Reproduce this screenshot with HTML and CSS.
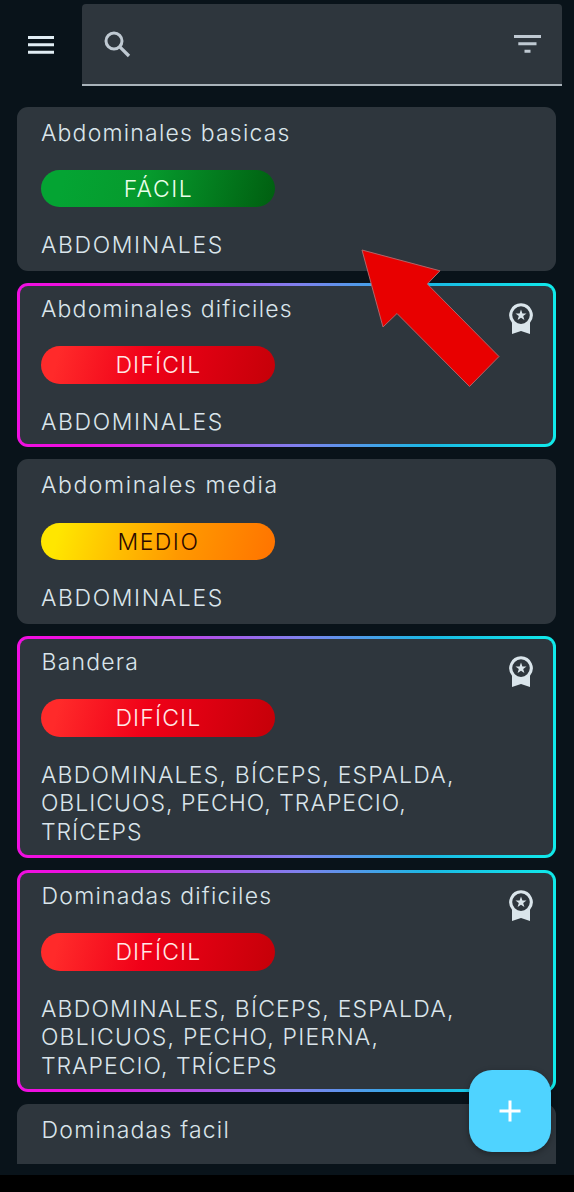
FILE: index.html
```html
<!DOCTYPE html>
<html lang="es">
<head>
<meta charset="utf-8">
<title>Ejercicios</title>
<link rel="stylesheet" href="styles.css">
</head>
<body>
<svg width="0" height="0" class="defs">
  <symbol id="badge" viewBox="0 0 24 32">
    <path fill-rule="evenodd" d="M12 .3a11.8 11.8 0 0 1 9 19.4V31l-9-3-9 3V19.700A11.800 11.800 0 0 1 12 .3zM12 3.300a8.800 8.800 0 1 0 0 17.600a8.800 8.800 0 0 0 0-17.600z"/>
    <path d="M12 6.600l1.400 3.900 4.100.1-3.300 2.500 1.200 4-3.400-2.400-3.400 2.400 1.200-4-3.300-2.500 4.100-.1z"/>
  </symbol>
</svg>
<div class="app">
  <header class="top">
    <button class="menu" aria-label="Menú"><svg width="26" height="18" viewBox="0 0 26 18"><path d="M0 0h26v3H0zM0 7.300h26v3H0zM0 14.700h26v3H0z"/></svg></button>
    <div class="search">
      <svg width="27" height="27" viewBox="0 0 27 27"><circle cx="10" cy="10" r="8" fill="none" stroke="currentColor" stroke-width="3"/><path d="M15.800 15.800L25 25" stroke="currentColor" stroke-width="3.300"/></svg>
      <svg width="27" height="18" viewBox="0 0 27 18"><path d="M0 0h27v3H0zM4.300 7.300h18.200v3H4.300zM10.500 14.700h6v3h-6z"/></svg>
    </div>
  </header>
  <main class="list">
    <article class="card">
      <h2 class="title">Abdominales basicas</h2>
      <div class="pill easy">FÁCIL</div>
      <p class="muscles"><span class="wide">ABDOMINALES</span></p>
    </article>
    <article class="card premium">
      <h2 class="title">Abdominales dificiles</h2>
      <svg class="badge"><use href="#badge"/></svg>
      <div class="pill hard">DIFÍCIL</div>
      <p class="muscles"><span class="wide">ABDOMINALES</span></p>
    </article>
    <article class="card">
      <h2 class="title wide">Abdominales media</h2>
      <div class="pill medium">MEDIO</div>
      <p class="muscles"><span class="wide">ABDOMINALES</span></p>
    </article>
    <article class="card premium">
      <h2 class="title inset">Bandera</h2>
      <svg class="badge"><use href="#badge"/></svg>
      <div class="pill hard">DIFÍCIL</div>
      <p class="muscles"><span>ABDOMINALES, BÍCEPS, ESPALDA,</span><span class="tight">OBLICUOS, PECHO, TRAPECIO,</span><span class="tight">TRÍCEPS</span></p>
    </article>
    <article class="card premium">
      <h2 class="title inset">Dominadas dificiles</h2>
      <svg class="badge"><use href="#badge"/></svg>
      <div class="pill hard">DIFÍCIL</div>
      <p class="muscles"><span>ABDOMINALES, BÍCEPS, ESPALDA,</span><span>OBLICUOS, PECHO, PIERNA,</span><span class="tight">TRAPECIO, TRÍCEPS</span></p>
    </article>
    <article class="card">
      <h2 class="title inset">Dominadas facil</h2>
    </article>
  </main>
  <div class="navbar"></div>
  <svg class="arrow" width="140" height="140" viewBox="0 0 140 140"><path d="M2 2L80 22.800 67.300 36 139 108.500 109.500 138.500 37 65.500 23 79z"/></svg>
  <button class="fab" aria-label="Añadir"><svg width="22" height="22" viewBox="0 0 22 22"><path d="M9.500.500h3v9h9v3h-9v9h-3v-9h-9v-3h9z"/></svg></button>
</div>
</body>
</html>
```
FILE: styles.css
```css
* { box-sizing: border-box; }
body { margin: 0; background: #09131a; }
.defs { display: block; position: absolute; }
.app {
  position: relative;
  display: flex;
  flex-direction: column;
  width: 574px;
  height: 1192px;
  overflow: hidden;
  background: #09131a;
  color: #dae5eb;
  font-family: Inter, "Liberation Sans", sans-serif;
  font-size: 23px;
  font-weight: 300;
  line-height: 28.8px;
}
svg { fill: currentColor; display: block; flex: none; }
button { border: 0; padding: 0; background: none; color: inherit; }
.top { display: flex; height: 86px; padding: 4px 12px 0 0; flex: none; }
.menu { width: 82px; display: flex; justify-content: center; align-items: center; color: #e1edf4; }
.search {
  flex: 1;
  display: flex;
  align-items: center;
  justify-content: space-between;
  padding: 0 21px 0 21.500px;
  border-bottom: 2px solid #a9b3ba;
  border-radius: 4px 4px 0 0;
  background: #2e363d;
  color: #bfc9d2;
}
.list {
  display: flex;
  flex-direction: column;
  gap: 12.2px;
  height: 1077.500px;
  padding: 20.500px 17.600px 0 17.400px;
  overflow: hidden;
  flex: none;
}
.card {
  position: relative;
  flex: none;
  padding: 12px 23.500px 10.800px;
  border-radius: 11px;
  background: #2e363d;
}
.premium {
  padding: 9px 20.500px 7.800px;
  border: 3px solid transparent;
  background: linear-gradient(#2e363d, #2e363d) padding-box, linear-gradient(90deg, #f00fe0 0%, #ee10e0 12%, #8080ee 52%, #1bb8e4 76%, #10eaea 100%) border-box;
}
.title { margin: 0 0 22.500px; font-size: inherit; font-weight: 300; letter-spacing: 1.2px; }
.title.inset { padding-left: 0.700px; }
.badge { position: absolute; top: 17px; right: 20px; width: 24px; height: 32px; }
.pill { width: 234px; height: 37.500px; border-radius: 19px; line-height: 38.800px; text-align: center; letter-spacing: 1.5px; text-indent: 1px; }
.easy { background: linear-gradient(105deg, #04a433 10%, #069a2d 45%, #005e10 100%); color: #eaffea; }
.hard { background: linear-gradient(105deg, #ff2a2a 8%, #f00018 45%, #c50008 100%); color: #ffe9e6; letter-spacing: 1.15px; }
.medium { background: linear-gradient(105deg, #ffe600 8%, #ff9800 60%, #ff7300 100%); color: #2c0a00; }
.muscles { display: flex; flex-direction: column; align-items: flex-start; margin: 23.900px 0 0; letter-spacing: 1.2px; }
.title, .muscles span { white-space: nowrap; }
.title.wide, .muscles .wide { letter-spacing: 1.600px; }
.muscles .tight { letter-spacing: 1px; }
.navbar { height: 17px; margin-top: auto; background: #000; flex: none; }
.arrow { position: absolute; left: 360px; top: 248px; fill: #e80000; stroke: #b06468; stroke-width: 1px; }
.fab {
  position: absolute;
  left: 469px;
  top: 1070px;
  width: 82px;
  height: 82px;
  display: flex;
  align-items: center;
  justify-content: center;
  border-radius: 23px;
  background: #4fd3ff;
  color: #fff;
  box-shadow: 0 2px 6px #0005;
}
```
